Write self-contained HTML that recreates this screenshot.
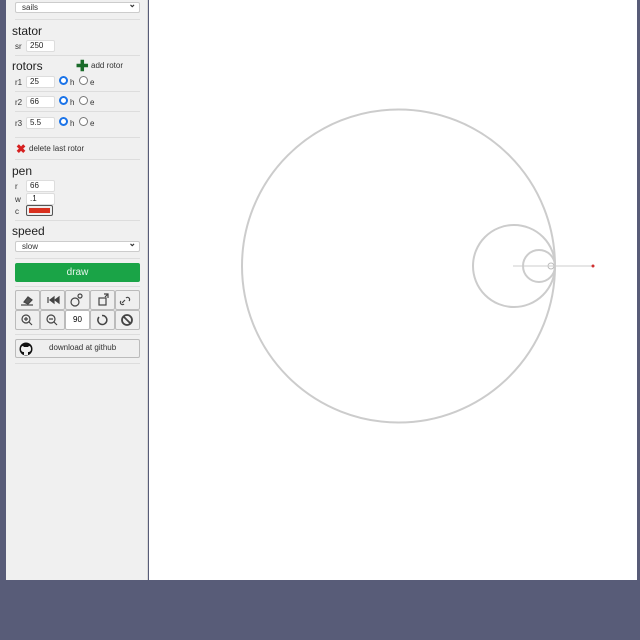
<!DOCTYPE html>
<html><head><style>
*{box-sizing:border-box;margin:0;padding:0}
body{width:640px;height:640px;background:#585c78;position:relative;font-family:"Liberation Sans",sans-serif;overflow:hidden}
#panel{position:absolute;left:6px;top:0;width:142px;height:580px;background:#f0f0f0;border-right:1px solid #d8d8d8}
#canvas{position:absolute;left:149px;top:0;width:488px;height:580px;background:#fff}
.a{position:absolute}
.h{font-size:12px;color:#222}
.s{font-size:8px;color:#333}
.in{position:absolute;height:12px;background:#fff;border:1px solid #ddd;border-radius:2px;font-size:8px;padding-left:3px;line-height:10px;color:#222}
.hr{position:absolute;left:9px;width:125px;height:1px;background:#ddd}
.sel{position:absolute;left:9px;width:125px;height:11px;background:#fff;border:1px solid #ccc;border-radius:2px;font-size:8px;padding-left:6px;line-height:9px;color:#333}
.sel:after{content:"⌄";position:absolute;right:3px;top:-3px;font-size:9px;font-weight:bold}
.rad{position:absolute;width:9px;height:9px;border-radius:50%;border:1px solid #777;background:#fff}
.rad.on{border:2.5px solid #1a73e8}
.btn{position:absolute;width:25px;height:20px;border:1px solid #bbb;border-radius:2px;background:#efefef}
</style></head><body>
<div id="panel">
<div class="sel" style="top:2px">sails</div>
<div class="hr" style="top:19px"></div>
<div class="a h" style="left:6px;top:24px">stator</div>
<div class="a s" style="left:9px;top:42px">sr</div><div class="in" style="left:20px;top:40px;width:29px">250</div>
<div class="hr" style="top:55px"></div>
<div class="a h" style="left:6px;top:59px">rotors</div>
<div class="a" style="left:70px;top:57px;color:#1a6b2a;font-size:15px;font-weight:bold">✚</div>
<div class="a s" style="left:85px;top:61px">add rotor</div>
<div class="a s" style="left:9px;top:78px">r1</div><div class="in" style="left:20px;top:76px;width:29px">25</div>
<div class="rad on" style="left:53px;top:76px"></div><div class="a s" style="left:64px;top:78px">h</div>
<div class="rad" style="left:73px;top:76px"></div><div class="a s" style="left:84px;top:78px">e</div>
<div class="hr" style="top:91px"></div>
<div class="a s" style="left:9px;top:98px">r2</div><div class="in" style="left:20px;top:96px;width:29px">66</div>
<div class="rad on" style="left:53px;top:96px"></div><div class="a s" style="left:64px;top:98px">h</div>
<div class="rad" style="left:73px;top:96px"></div><div class="a s" style="left:84px;top:98px">e</div>
<div class="hr" style="top:111px"></div>
<div class="a s" style="left:9px;top:119px">r3</div><div class="in" style="left:20px;top:117px;width:29px">5.5</div>
<div class="rad on" style="left:53px;top:117px"></div><div class="a s" style="left:64px;top:119px">h</div>
<div class="rad" style="left:73px;top:117px"></div><div class="a s" style="left:84px;top:119px">e</div>
<div class="hr" style="top:137px"></div>
<div class="a" style="left:10px;top:142px;color:#d62020;font-size:12px;font-weight:bold">✖</div>
<div class="a s" style="left:23px;top:144px">delete last rotor</div>
<div class="hr" style="top:159px"></div>
<div class="a h" style="left:6px;top:164px">pen</div>
<div class="a s" style="left:9px;top:182px">r</div><div class="in" style="left:20px;top:180px;width:29px">66</div>
<div class="a s" style="left:9px;top:195px">w</div><div class="in" style="left:20px;top:193px;width:29px">.1</div>
<div class="a s" style="left:9px;top:207px">c</div>
<div class="a" style="left:20px;top:205px;width:27px;height:11px;border:1px solid #555;border-radius:2px;background:#eee;padding:2px"><div style="height:5px;background:#d9301e"></div></div>
<div class="hr" style="top:220px"></div>
<div class="a h" style="left:6px;top:224px">speed</div>
<div class="sel" style="top:241px">slow</div>
<div class="hr" style="top:258px"></div>
<div class="a" style="left:9px;top:263px;width:125px;height:19px;background:#1aa447;border-radius:2px;color:#e8f5ec;font-size:10px;text-align:center;line-height:19px">draw</div>
<div class="hr" style="top:286px"></div>
<div class="btn" style="left:9px;top:290px"></div><div class="btn" style="left:34px;top:290px"></div><div class="btn" style="left:59px;top:290px"></div><div class="btn" style="left:84px;top:290px"></div><div class="btn" style="left:109px;top:290px"></div>
<div class="btn" style="left:9px;top:310px"></div><div class="btn" style="left:34px;top:310px"></div><div class="btn" style="left:59px;top:310px;background:#fff;font-size:8px;text-align:center;line-height:18px">90</div><div class="btn" style="left:84px;top:310px"></div><div class="btn" style="left:109px;top:310px"></div>
<svg class="a" style="left:9px;top:290px" width="125" height="40" fill="none" stroke="#444" stroke-width="1.2">
<path d="M9 12l4-5 4 3-4 4z" fill="#555"/><path d="M6 15h12"/>
<path d="M33 7v6M39 7l-4 3 4 3zM44 7l-4 3 4 3z" fill="#444"/>
<circle cx="60" cy="12" r="4"/><circle cx="65" cy="6" r="2"/>
<rect x="84" y="8" width="7" height="7"/><path d="M89 4h4v4M93 4l-3 3"/>
<path d="M107 13l3-3M109 14a2 2 0 0 1-3-3M111 8a2 2 0 0 1 3 3"/>
<circle cx="11" cy="29" r="4"/><path d="M14 32l3 3M9 29h4M11 27v4"/>
<circle cx="36" cy="29" r="4"/><path d="M39 32l3 3M34 29h4"/>
<path d="M84 27a4.5 4.5 0 1 0 3-1.5" stroke-width="1.5"/>
<circle cx="112" cy="30" r="5" stroke-width="1.8"/><path d="M109 27l6 6" stroke-width="1.8"/>
</svg>
<div class="hr" style="top:334px"></div>
<div class="a" style="left:9px;top:339px;width:125px;height:19px;border:1px solid #bbb;border-radius:2px;background:#efefef"></div>
<svg class="a" style="left:13px;top:342px" width="14" height="14"><circle cx="7" cy="7" r="6.5" fill="#111"/><path d="M5 13v-3c-2 0-3-1-3-3s1-3 2-3l1 1h4l1-1c1 0 2 1 2 3s-1 3-3 3v3z" fill="#f0f0f0"/></svg>
<div class="a s" style="left:43px;top:343px">download at github</div>
<div class="hr" style="top:363px"></div>
</div>
<div id="canvas">
<svg width="488" height="580" fill="none">
<circle cx="249.5" cy="266" r="156.5" stroke="#ccc" stroke-width="2"/>
<circle cx="365" cy="266" r="41" stroke="#ccc" stroke-width="2"/>
<circle cx="390" cy="266" r="16" stroke="#ccc" stroke-width="2"/>
<circle cx="402" cy="266" r="3" stroke="#bbb"/>
<path d="M364 266h80" stroke="#ccc" stroke-width="1"/>
<circle cx="444" cy="266" r="1.5" fill="#d03030"/>
</svg>
</div>
</body></html>
